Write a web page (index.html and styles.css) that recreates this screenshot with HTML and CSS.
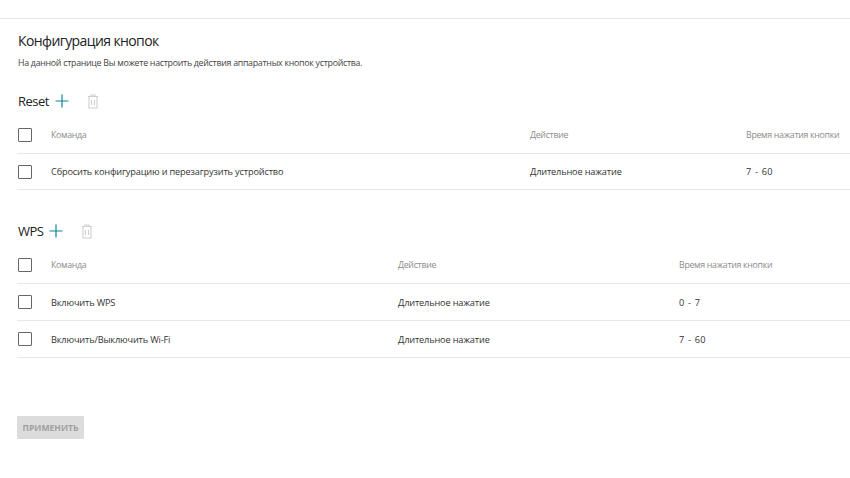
FILE: index.html
```
<!DOCTYPE html>
<html lang="ru">
<head>
<meta charset="utf-8">
<title>Конфигурация кнопок</title>
<link rel="stylesheet" href="styles.css">
</head>
<body>
<div class="page">
  <h1 class="title">Конфигурация кнопок</h1>
  <p class="subtitle">На данной странице Вы можете настроить действия аппаратных кнопок устройства.</p>

  <section class="group group-reset">
    <div class="group-head">
      <h2 class="group-name">Reset</h2>
      <svg class="icon-plus" width="14" height="14" viewBox="0 0 14 14"><path d="M7 0.5V13.5M0.5 7H13.5" fill="none" stroke="#0f8296" stroke-width="1.2"/></svg>
      <svg class="icon-trash" width="12" height="15" viewBox="0 0 12 15"><path d="M1 2.5h10M4 2.5V1h4v1.5M2 2.5v11.5h8V2.5M4.5 6v5M7.5 6v5" fill="none" stroke="#cfcfcf" stroke-width="1.1"/></svg>
    </div>
    <div class="row row-head">
      <span class="check"></span><span>Команда</span><span>Действие</span><span>Время нажатия кнопки</span>
    </div>
    <div class="row">
      <span class="check"></span><span>Сбросить конфигурацию и перезагрузить устройство</span><span>Длительное нажатие</span><span class="time">7 - 60</span>
    </div>
  </section>

  <section class="group group-wps">
    <div class="group-head">
      <h2 class="group-name">WPS</h2>
      <svg class="icon-plus" width="14" height="14" viewBox="0 0 14 14"><path d="M7 0.5V13.5M0.5 7H13.5" fill="none" stroke="#0f8296" stroke-width="1.2"/></svg>
      <svg class="icon-trash" width="12" height="15" viewBox="0 0 12 15"><path d="M1 2.5h10M4 2.5V1h4v1.5M2 2.5v11.5h8V2.5M4.5 6v5M7.5 6v5" fill="none" stroke="#cfcfcf" stroke-width="1.1"/></svg>
    </div>
    <div class="row row-head">
      <span class="check"></span><span>Команда</span><span>Действие</span><span>Время нажатия кнопки</span>
    </div>
    <div class="row">
      <span class="check"></span><span>Включить WPS</span><span>Длительное нажатие</span><span class="time">0 - 7</span>
    </div>
    <div class="row">
      <span class="check"></span><span>Включить/Выключить Wi-Fi</span><span>Длительное нажатие</span><span class="time">7 - 60</span>
    </div>
  </section>

  <button class="apply" type="button">ПРИМЕНИТЬ</button>
</div>
</body>
</html>
```
FILE: styles.css
```
* { box-sizing: border-box; }
html, body { margin: 0; padding: 0; background: #fff; }
body { font-family: "Open Sans", "Noto Sans", sans-serif; color: #333; overflow: hidden; height: 478px; }
.page { margin-top: 18px; border-top: 1px solid #e6e6e6; padding: 0 0 0 18px; }
.title { margin: 12px 0 0; font-size: 14px; line-height: 20px; font-weight: 400; color: #222; letter-spacing: -.6px; }
.subtitle { margin: 3px 0 0; font-size: 8.8px; line-height: 18px; color: #444; letter-spacing: -.27px; }
.group-head { display: flex; align-items: center; height: 20px; }
.group-reset { margin-top: 19px; }
.group-wps { margin-top: 31px; }
.group-name { margin: 0; font-size: 13px; line-height: 20px; font-weight: 400; color: #222; letter-spacing: -.5px; }
.icon-plus { margin-left: 6px; }
.icon-trash { margin-left: 18px; }
.row { display: grid; align-items: center; height: 37px; border-bottom: 1px solid #e8e8e8; font-size: 9.2px; color: #333; letter-spacing: -.16px; margin-left: -1px; padding-left: 1px; }
.group-reset .row:last-child { height: 36px; }
.row-head { height: 43px; color: #8c8c8c; padding-top: 5px; font-size: 8.8px; letter-spacing: -.3px; }
.group-reset .row { grid-template-columns: 33px 479px 216px 1fr; }
.group-wps .row { grid-template-columns: 33px 347px 281px 1fr; }
.check { width: 14px; height: 14px; border: 1.5px solid #666; border-radius: 1px; background: #fff; }
.time { letter-spacing: .2px; word-spacing: 1px; }
.apply { display: block; margin: 58px 0 0 -1px; width: 67px; height: 23px; border: 0; border-radius: 1px; padding: 0; background: #dcdcdc; color: #a0a0a0; font-family: "Open Sans", sans-serif; font-size: 8.6px; font-weight: 700; letter-spacing: 0; }
```
